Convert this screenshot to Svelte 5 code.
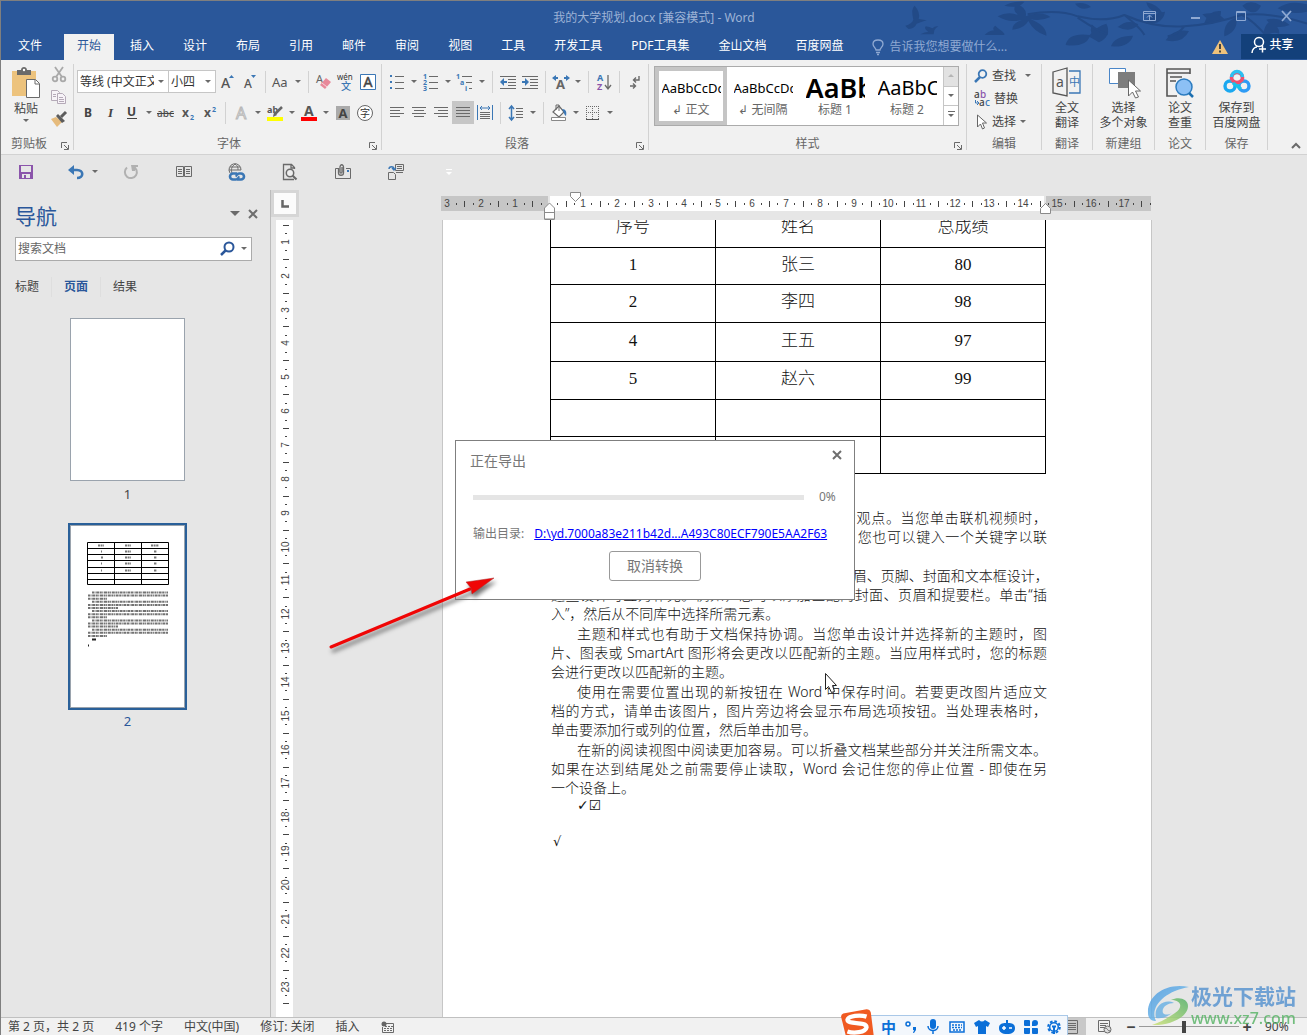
<script>
	const tabs = ['开始', '插入', '设计', '布局', '引用', '邮件', '审阅', '视图', '工具', '开发工具', 'PDF工具集', '金山文档', '百度网盘']
	let activeTab = $state('开始')
	let navTab = $state('页面')
	let zoom = $state(45)

	const g = 'fill="none" stroke="#6a6a6a"'
	const b = 'fill="none" stroke="#3b77b5"'

	// inner markup of the toolbar icons, each in its own w x h box
	const icons = {
		save: [16, 16, '<path fill="#8b55ab" d="M1 1h14v14H1z"/><path fill="#e6e6e6" d="M3 2h10v6H3zM4 10h8v4H4z"/><path fill="#8b55ab" d="M6 11h2v3H6z"/>'],
		undo: [16, 16, `<path ${b} stroke-width="2.6" d="M3 6h6c7 0 7 8 0 8"/><path fill="#3b77b5" d="M0 6l6-5v10z"/>`],
		redo: [16, 16, '<path fill="none" stroke="#b1b1b1" stroke-width="2" d="M10 2.5A6 6 0 1 1 4 3.5"/><path fill="#b1b1b1" d="M8 1h7v2h-3v4H9z"/>'],
		read: [18, 14, `<path ${g} d="M1.5 1.5h7v10h-7zM9.5 1.5h7v10h-7zM3 4.5h4M3 6.5h4M3 8.5h4M11 4.5h4M11 6.5h4M11 8.5h4"/>`],
		link: [18, 18, `<path ${g} d="M2 10a6 6 0 1 1 11-3M1 7h12M7 1c-4 3-4 6-3 9M7 1c3 2 3 4 3 6M2 4h10"/><path ${b} stroke-width="2.6" d="M9 10.5H5a3 3 0 0 0 0 6h3c2 0 3-2 2-3M9 16.5h4a3 3 0 0 0 0-6h-2c-2 0-3 2-2 3"/>`],
		preview: [16, 18, `<path ${g} stroke-width="1.3" d="M12 16.5H1.5v-15h8l3 3V6M9 2v3h4"/><circle cx="8" cy="10" r="3.7" fill="#eee" stroke="#6a6a6a" stroke-width="1.5"/><path ${g} stroke-width="2.2" d="M10.5 12.5l4 4"/>`],
		attach: [18, 16, `<path ${g} d="M4 4.5H1.5v10h15v-10H12"/><path ${g} stroke-width="1.3" d="M4.5 4v5c0 3 5 3 5 0V3c0-3-3.5-3-3.5 0v5c0 1.5 2 1.5 2 0V3"/><path fill="#3b77b5" d="M13 6h2v2h-2z"/>`],
		compare: [18, 18, `<path ${g} d="M8.5 1.5h8v6h-8zM10 3.5h5M10 5.5h5M9 9.5h7M1.5 9.5h5l2 2v5h-7z" /><path ${b} stroke-width="1.4" d="M2 6c0-3 5-3 5 0M5 5l2 2 2-2"/>`],
		more: [8, 8, '<path stroke="#fff" d="M1 1.5h6"/><path fill="#fff" d="M1 4h6L4 7z"/>'],
		paste: [30, 32, '<path fill="#edc37d" d="M1 4h24v25H1z"/><path fill="#6a6a6a" d="M6 3h4c0-4 6-4 6 0h4v5H6z"/><circle cx="13" cy="3" r="1.2" fill="#fff"/><path fill="#fff" stroke="#6a6a6a" d="M15.5 12.5h9l4 4v14h-13z"/><path fill="none" stroke="#6a6a6a" d="M24 13v4h4"/>'],
		cut: [16, 16, '<g fill="none" stroke="#a9a9a9" stroke-width="1.8"><path d="M4 0l7 10M12 0L5 10"/><circle cx="4" cy="12" r="2.3"/><circle cx="12" cy="12" r="2.3"/></g>'],
		copy: [16, 14, '<path fill="#f7f3f8" stroke="#b5aab8" d="M.5.5h6l2 2v8h-8z"/><path fill="#f7f3f8" stroke="#b5aab8" d="M6.5 3.5h5l3 3v7h-8z"/><path stroke="#b5aab8" d="M2 4.5h3M2 6.5h3M8 7.5h4M8 9.5h5M8 11.5h5"/>'],
		brush: [16, 16, '<path fill="#e6bb7c" d="M0 8l5-2 6 5-5 5z"/><path fill="#5c5c5c" d="M5 5l2-2 7 7-3 2z"/><path stroke="#5c5c5c" stroke-width="3" d="M10 6l5-5"/>'],
		grow: [14, 16, '<text x="0" y="14" font-size="14" fill="#555" font-weight="500">A</text><path fill="#3b77b5" d="M8 4l2.5-3L13 4z"/>'],
		shrink: [14, 16, '<text x="1" y="14" font-size="12" fill="#555" font-weight="500">A</text><path fill="#3b77b5" d="M8 1h5l-2.5 3z"/>'],
		caseAa: [20, 16, '<text x="1" y="13" font-size="13" fill="#555">Aa</text>'],
		eraser: [16, 16, '<text x="0" y="9" font-size="11" fill="#666">A</text><path fill="#e8899a" d="M10 4l5 4-6 7-5-4z"/><path stroke="#f8d3da" d="M6 9l5 4"/>'],
		pinyin: [18, 18, '<text x="0" y="7" font-size="8" fill="#333">wén</text><text x="4" y="17" font-size="10" font-weight="500" fill="#3b77b5">文</text>'],
		boxA: [16, 16, '<path fill="#fff" stroke="#3b77b5" d="M.5.5h15v15H.5z"/><text x="3.5" y="13" font-size="14" fill="#444" stroke="#444" stroke-width=".5">A</text>'],
		bold: [12, 16, '<text x="2" y="12" font-size="12" font-weight="700" fill="#444">B</text>'],
		italic: [12, 16, '<text x="4" y="12" font-size="13" font-weight="700" font-style="italic" font-family="Liberation Serif" fill="#444">I</text>'],
		under: [12, 16, '<text x="1" y="11" font-size="12" font-weight="700" fill="#444">U</text><path stroke="#444" d="M1 13.5h10"/>'],
		strike: [18, 16, '<text x="0" y="12" font-size="10" font-weight="500" fill="#555">abc</text><path stroke="#444" d="M0 8.5h17"/>'],
		sub: [14, 16, '<text x="1" y="12" font-size="12" font-weight="700" fill="#555">x</text><text x="9" y="15" font-size="7" font-weight="700" fill="#3b77b5">2</text>'],
		sup: [14, 16, '<text x="1" y="12" font-size="12" font-weight="700" fill="#555">x</text><text x="9" y="7" font-size="7" font-weight="700" fill="#3b77b5">2</text>'],
		effects: [16, 16, '<text x="3" y="14" font-size="16" fill="#fafafa" stroke="#b8b8b8">A</text>'],
		marker: [18, 18, '<text x="1" y="9" font-size="9" font-weight="700" fill="#555">ab</text><path stroke="#666" stroke-width="2.5" d="M16 3l-7 7"/><path fill="#666" d="M8 8l3 3-4 2z"/><path fill="#ff0" d="M1 13h16v4H1z"/>'],
		color: [18, 18, '<text x="4" y="12" font-size="14" font-weight="700" fill="#555">A</text><path fill="red" d="M1 13h16v4H1z"/>'],
		shade: [16, 16, '<path fill="#aaa" d="M1 1h14v14H1z"/><text x="3.5" y="13" font-size="13" font-weight="700" fill="#444">A</text>'],
		circled: [18, 18, '<circle cx="9" cy="9" r="7.5" fill="#fff" stroke="#666"/><text x="4" y="13" font-size="10" fill="#333">字</text>'],
		bullets: [16, 16, `<path fill="#3b77b5" d="M1 1h2v2H1zM1 7h2v2H1zM1 13h2v2H1z"/><path ${g} d="M6 2.5h9M6 8.5h9M6 14.5h9"/>`],
		numbers: [16, 18, `<g font-size="7" font-weight="700" fill="#3b77b5"><text y="6">1</text><text y="12">2</text><text y="18">3</text></g><path ${g} d="M6 3.5h9M6 9.5h9M6 15.5h9"/>`],
		levels: [18, 18, `<g font-size="7" font-weight="700" fill="#3b77b5"><text y="6">1</text><text x="4" y="12">a</text><text x="9" y="18">i</text></g><path ${g} d="M6 3.5h10M10 9.5h6M13 15.5h3"/>`],
		outdent: [18, 16, `<path ${g} d="M1 2.5h16M9 5.5h8M9 8.5h8M9 11.5h8M1 14.5h16"/><path fill="#3b77b5" d="M1 8l4-4v3h3v2H5v3z"/>`],
		indent: [18, 16, `<path ${g} d="M1 2.5h16M9 5.5h8M9 8.5h8M9 11.5h8M1 14.5h16"/><path fill="#3b77b5" d="M8 8L4 4v3H1v2h3v3z"/>`],
		width: [18, 16, '<text x="4" y="15" font-size="13" font-weight="700" fill="#666">A</text><path fill="#3b77b5" d="M0 4l4-3v2h2v2H4v2zM18 4l-4-3v2h-2v2h2v2z"/>'],
		sort: [16, 18, `<text x="1" y="8" font-size="9" font-weight="700" fill="#3b77b5">A</text><text x="1" y="17" font-size="9" font-weight="700" fill="#8b55ab">Z</text><path ${g} stroke-width="1.3" d="M12 2v14M9 12l3 4 3-4"/>`],
		marks: [12, 16, `<path ${g} stroke-width="1.4" d="M10 2v4H5M7 3.5L4.5 6 7 8.5M1 12h5M4 9.5L6.5 12 4 14.5"/>`],
		left: [16, 14, `<path ${g} d="M1 1.5h14M1 4.5h10M1 7.5h14M1 10.5h10"/>`],
		center: [16, 14, `<path ${g} d="M1 1.5h14M3 4.5h10M1 7.5h14M3 10.5h10"/>`],
		right: [16, 14, `<path ${g} d="M1 1.5h14M5 4.5h10M1 7.5h14M5 10.5h10"/>`],
		justify: [16, 14, `<path ${g} d="M1 1.5h14M1 4.5h14M1 7.5h14M1 10.5h14"/>`],
		distribute: [18, 18, `<path ${b} d="M1.5 1v15M16.5 1v15M4 4h10M6 2L4 4l2 2M12 2l2 2-2 2"/><path ${g} d="M4 8.5h10M4 10.5h10M4 12.5h10M4 14.5h10"/>`],
		spacing: [16, 18, `<path ${b} stroke-width="1.5" d="M3.5 2v14M1 5l2.5-3L6 5M1 13l2.5 3L6 13"/><path ${g} d="M8 4.5h7M8 7.5h7M8 10.5h7M8 13.5h7"/>`],
		bucket: [18, 18, '<path fill="#fff" stroke="#6a6a6a" stroke-width="1.2" d="M3 8l6-6 5 6-5 5z"/><path fill="none" stroke="#6a6a6a" d="M6 6V1h3v6"/><path fill="#3b77b5" d="M12 5c4 0 5 3 4 7-2-1-2-4-4-7z"/><path fill="#fff" stroke="#888" d="M1.5 13.5h14v3h-14z"/>'],
		borders: [16, 16, '<path fill="none" stroke="#6a6a6a" stroke-dasharray="1 1" d="M1.5 1v13M13.5 1v13M7.5 1v13M1 1.5h13M1 7.5h13"/><path stroke="#555" d="M1 14.5h13"/>'],
		find: [14, 14, `<circle cx="8.5" cy="5" r="3.8" ${b} stroke-width="1.8"/><path ${b} stroke-width="2.5" d="M6 8l-5 5"/>`],
		replace: [16, 16, '<g font-size="10" font-weight="500"><text x="0" y="7" fill="#444">a</text><text x="6" y="7" fill="#8b55ab">b</text><text x="5" y="15" fill="#444">a</text><text x="11" y="15" fill="#3b77b5">c</text></g><path fill="none" stroke="#3b77b5" d="M1.5 9v3H5M3 10l2 2-2 2"/>'],
		pointer: [14, 16, '<path fill="#fff" stroke="#666" d="M3.5 1v12l3-3 2 5 2-1-2-5h4z"/>'],
		translate: [30, 32, `<path fill="none" stroke="#555" stroke-width="1.3" d="M1 5l14-4v28L1 26z"/><text x="4" y="20" font-size="14" fill="#555">a</text><path ${b} stroke-width="1.3" d="M17 4h11v22H17"/><text x="17" y="19" font-size="11" fill="#3b77b5">中</text>`],
		objects: [32, 32, '<path fill="#fff" stroke="#4a86c8" d="M1.5 1.5h16v15h-16z"/><path fill="#7d7d7d" d="M10 5h17v16H10z"/><path fill="#fff" stroke="#666" d="M20.5 13v16l4-4 3 6 3-1-3-6h5z"/>'],
		paper: [30, 32, '<path fill="none" stroke="#555" stroke-width="1.6" d="M25 7V2H2v27h10M2 6h23"/><path stroke="#555" stroke-width="1.5" d="M5 10h12M5 14h6"/><circle cx="19" cy="20" r="8" fill="#8cc0f5" stroke="#2c7cc0" stroke-width="1.5"/><path stroke="#1c6fb0" stroke-width="2.5" d="M24 26l4 4"/>'],
		cloud: [30, 32, '<g fill="none" stroke-width="3.4"><circle cx="8" cy="19" r="5" stroke="#1aa8f0"/><circle cx="22" cy="19" r="5" stroke="#2e9bf5"/><circle cx="15" cy="11" r="5.5" stroke="#29c0f2"/><path stroke="#f0506e" d="M10 13a5.5 5.5 0 1 1 10 0q-5 5-10 0"/><path stroke="#29c0f2" d="M9.500 10a5.500 5.500 0 0 1 11 0"/><path stroke="#16c4e8" d="M11 16l8 6"/></g>'],
		launcher: [8, 8, `<path ${g} d="M.5 6V.5H6M3 3l4 4M7.5 3v4.5H3"/>`],
		search: [18, 16, '<circle cx="12" cy="6" r="4.5" fill="none" stroke="#2b579a" stroke-width="2"/><path stroke="#2b579a" stroke-width="2.5" d="M9 9l-5 5"/>'],
		close: [12, 12, '<path stroke="#6e6e6e" stroke-width="2" d="M2 2l8 8M10 2l-8 8"/>'],
		bulb: [12, 16, '<path fill="none" stroke="#8fa9d2" stroke-width="1.3" d="M4 11c0-2-3-3-3-6s2-4 5-4 5 1 5 4-3 4-3 6zM4 13.5h4M5 15.5h2"/>'],
		warn: [16, 16, '<path fill="#efc27b" d="M8 1l8 14H0z"/><path stroke="#444" stroke-width="2" d="M8 5v5M8 11.5v2"/>'],
		person: [16, 18, '<path fill="none" stroke="#fff" stroke-width="1.5" d="M1 17c0-4 3-6 5-6M8 1.5c6 0 6 9 0 9s-6-9 0-9M8 13h7M11.5 9.5v7"/>'],
		options: [14, 12, '<path fill="none" stroke="#8fa9d2" d="M.5 1.5h12v9H.5zM1 3.5h12M6.5 10V5M4 7.5L6.5 5 9 7.5"/>'],
		minimize: [10, 10, '<path stroke="#8fa9d2" stroke-width="2" d="M0 7h9"/>'],
		maximize: [12, 12, '<path fill="none" stroke="#8fa9d2" d="M.5 1.5h9v9h-9zM0 2.5h10"/>'],
		exit: [12, 12, '<path stroke="#8fa9d2" stroke-width="1.8" d="M2 1l9 10M11 1L2 11"/>'],
		record: [14, 12, `<path ${g} d="M4 2.5h8.5v9h-11V6"/><path ${g} stroke-dasharray="2 1" d="M4 5.5h8M3 7.5h9M3 9.5h9"/><circle cx="3" cy="3" r="2.5" fill="#666"/>`],
		print: [16, 14, `<path ${g} d="M2.5.5h11v13h-11zM4 3.5h8M4 5.5h8M4 7.5h8M4 9.5h8"/>`],
		web: [16, 14, `<path ${g} d="M7 11.5H1.5v-11h11V6M3 3.5h8M3 5.5h6M3 7.5h4"/><circle cx="10.5" cy="9.5" r="3.5" fill="#ddd" stroke="#6a6a6a"/><path ${g} d="M8 8c3 0 2 3 5 3"/>`],
		collapse: [10, 8, '<path fill="none" stroke="#6a6a6a" stroke-width="2" d="M1 6l4-4 4 4"/>']
	}

	// c marks a drop-down arrow after the button, '|' is a divider
	const fontTop = ['grow', 'shrink', '|', 'caseAa c', '|', 'eraser', 'pinyin', 'boxA']
	const fontBottom = ['bold', 'italic', 'under c', 'strike', 'sub', 'sup', '|', 'effects c', 'marker c', 'color c', 'shade', 'circled']
	const paraTop = ['bullets c', 'numbers c', 'levels c', '|', 'outdent', 'indent', '|', 'width c', '|', 'sort', '|', 'marks']
	const paraBottom = ['left', 'center', 'right', 'justify', 'distribute', '|', 'spacing c', '|', 'bucket c', 'borders c']

	const styles = [
		{ sample: 'AaBbCcDc', label: '↲ 正文', kind: 'body' },
		{ sample: 'AaBbCcDc', label: '↲ 无间隔', kind: 'body' },
		{ sample: 'AaBb', label: '标题 1', kind: 'h1' },
		{ sample: 'AaBbC', label: '标题 2', kind: 'h2' }
	]

	const bigGroups = [
		{ icon: 'translate', lines: ['全文', '翻译'], group: '翻译', width: 51 },
		{ icon: 'objects', lines: ['选择', '多个对象'], group: '新建组', width: 62 },
		{ icon: 'paper', lines: ['论文', '查重'], group: '论文', width: 51 },
		{ icon: 'cloud', lines: ['保存到', '百度网盘'], group: '保存', width: 62 }
	]

	const rows = [
		['序号', '姓名', '总成绩', 38],
		['1', '张三', '80', 37],
		['2', '李四', '98', 38],
		['4', '王五', '97', 39],
		['5', '赵六', '99', 38],
		['', '', '', 37],
		['', '', '', 37]
	]

	const paragraphs = [
		['视频提供了功能强大的方法帮助您证明您的观点。当您单击联机视频时，', '可以在想要添加的视频的嵌入代码中进行粘贴。您也可以键入一个关键字以联', '机搜索最适合您的文档的视频。'],
		['为使您的文档具有专业外观，Word 提供了页眉、页脚、封面和文本框设计，', '这些设计可互为补充。例如，您可以添加匹配的封面、页眉和提要栏。单击“插', '入”，然后从不同库中选择所需元素。'],
		['主题和样式也有助于文档保持协调。当您单击设计并选择新的主题时，图', '片、图表或 SmartArt 图形将会更改以匹配新的主题。当应用样式时，您的标题', '会进行更改以匹配新的主题。'],
		['使用在需要位置出现的新按钮在 Word 中保存时间。若要更改图片适应文', '档的方式，请单击该图片，图片旁边将会显示布局选项按钮。当处理表格时，', '单击要添加行或列的位置，然后单击加号。'],
		['在新的阅读视图中阅读更加容易。可以折叠文档某些部分并关注所需文本。', '如果在达到结尾处之前需要停止读取，Word 会记住您的停止位置 - 即使在另', '一个设备上。']
	]

	// ruler marks: a number per centimetre, a bar at the half, dots at the quarters
	const cm = 33.85
	const marks = (from, to, zero) => {
		const list = []
		for (let q = from * 4; q <= to * 4; q++) {
			if (q === 0) continue
			list.push({ at: Math.round(zero + (q * cm) / 4), n: q % 4 === 0 ? Math.abs(q / 4) : null, half: q % 2 === 0 })
		}
		return list
	}
	const across = marks(-3, 17.75, 108)
	const down = marks(-1, 23.5, -12).filter((m) => m.at > 0)
</script>

{#snippet icon(name)}
	<svg class="icon" width={icons[name][0]} height={icons[name][1]} viewBox="0 0 {icons[name][0]} {icons[name][1]}" aria-hidden="true">{@html icons[name][2]}</svg>
{/snippet}

{#snippet caret()}
	<svg class="icon" width="6" height="4" viewBox="0 0 6 4" aria-hidden="true"><path fill="#6a6a6a" d="M0 0h6L3 3z" /></svg>
{/snippet}

{#snippet tools(items)}
	{#each items as item}
		{#if item === '|'}
			<span class="divider"></span>
		{:else}
			<button class="tool" class:on={item === 'justify'} aria-label={item.split(' ')[0]}>{@render icon(item.split(' ')[0])}</button>
			{#if item.endsWith(' c')}
				<button class="drop" aria-label="more">{@render caret()}</button>
			{/if}
		{/if}
	{/each}
{/snippet}

<div class="window">
	<header class="top">
		<svg class="foliage" width="436" height="60" viewBox="0 0 1308 180" aria-hidden="true">
			<g fill="#224a87">
				<path d="M103 74q20-6 24-18-8-34 4-42 18 20 12 40l24 4q-18 6-30 10-6 14-24 16-6-4-10-10zM148 100q14-8 24-8-14-8-8-16 12 2 20 6 8-8 18-6-8 4-12 12l-2 12zM341 102q10-12 28-14-6-8 4-14 10 10 14 12 8 4 13 12v4z" />
				<path d="M380 46q30-16 62-4-22-16-4-32 32 12 26 36 50-18 74 2-30 14-60 6 50 20 48 50-36-10-54-44-14 24-48 26 0-20 30-30-40 12-74-10zM400 14q24-14 60-12-16 22-60 12z" />
				<path d="M584 132q8-38 72-30 24-28 50-34 18 36-22 56l-28-16q-14 32-72 24zM612 8q30-6 48 10-30 14-48-10zM662 70q24 16 20 54-30-20-20-54z" />
				<path d="M720 136q10-32 66-32-10 36-66 32zM826 4q34 6 50 34-44-4-50-34zM824 68q16-34 58-36-6 40-58 36zM740 78q30-26 62-8-22 28-62 8zM1000 66q12-40 50-36 0 46-50 36zM884 118q22-36 70-28-20 40-70 28z" />
				<path d="M994 40q44-10 66 14-34 20-66-14zM1060 106q-4-44 36-56 6 42-36 56zM1114 14q24-20 56 0-20 40-56 0zM1176 110q0-36 22-50 30 20 26 38-20-10-48 12zM1220 22q34-26 88-12v22q-46 12-88-10zM1186 56q40-10 70 16-44 18-70-16z" />
			</g>
			<g fill="none" stroke="#224a87" stroke-width="6">
				<path d="M470 40q90-16 150 6 80 20 140-4 90 40 180 34t170-34q90-10 198 26M620 50q60 40 90 50M760 42q50 40 60 60M940 76q-20 26-50 30M1110 40q40 20 80 70" />
			</g>
		</svg>
		<div class="title">
			<span class="doc-name">我的大学规划.docx [兼容模式] - Word</span>
			<div class="controls">
				<button aria-label="功能区显示选项">{@render icon('options')}</button>
				<button aria-label="最小化">{@render icon('minimize')}</button>
				<button aria-label="最大化">{@render icon('maximize')}</button>
				<button aria-label="关闭">{@render icon('exit')}</button>
			</div>
		</div>
		<nav class="tabs">
			<button class="tab file">文件</button>
			{#each tabs as tab}
				<button class="tab" class:active={tab === activeTab} onclick={() => (activeTab = tab)}>{tab}</button>
			{/each}
			<button class="tell">{@render icon('bulb')} 告诉我您想要做什么...</button>
			<span class="warn">{@render icon('warn')}</span>
			<button class="share">{@render icon('person')}共享</button>
		</nav>
	</header>

	<section class="ribbon">
		<div class="group clipboard">
			<div class="content">
				<button class="paste">{@render icon('paste')}<span>粘贴</span>{@render caret()}</button>
				<div class="stack">
					<button aria-label="剪切">{@render icon('cut')}</button>
					<button aria-label="复制">{@render icon('copy')}</button>
					<button aria-label="格式刷">{@render icon('brush')}</button>
				</div>
			</div>
			<div class="label">剪贴板<button class="launch" aria-label="剪贴板设置">{@render icon('launcher')}</button></div>
		</div>
		<div class="group font">
			<div class="content lines">
				<div class="line">
					<div class="combo face"><select aria-label="字体"><option>等线 (中文正文)</option></select>{@render caret()}</div>
					<div class="combo size"><select aria-label="字号"><option>小四</option></select>{@render caret()}</div>
					{@render tools(fontTop)}
				</div>
				<div class="line">{@render tools(fontBottom)}</div>
			</div>
			<div class="label">字体<button class="launch" aria-label="字体设置">{@render icon('launcher')}</button></div>
		</div>
		<div class="group para">
			<div class="content lines">
				<div class="line">{@render tools(paraTop)}</div>
				<div class="line">{@render tools(paraBottom)}</div>
			</div>
			<div class="label">段落<button class="launch" aria-label="段落设置">{@render icon('launcher')}</button></div>
		</div>
		<div class="group style-group">
			<div class="content">
				<div class="gallery">
					{#each styles as style, i}
						<button class="style" class:chosen={i === 0}>
							<span class="sample {style.kind}">{style.sample}</span>
							<span class="style-name">{style.label}</span>
						</button>
					{/each}
					<div class="scroller">
						<button class="dim" aria-label="上一行"><svg width="6" height="4" aria-hidden="true"><path fill="#b5b5b5" d="M0 3h6L3 0z" /></svg></button>
						<button aria-label="下一行">{@render caret()}</button>
						<button class="all" aria-label="全部样式">{@render caret()}</button>
					</div>
				</div>
			</div>
			<div class="label">样式<button class="launch" aria-label="样式设置">{@render icon('launcher')}</button></div>
		</div>
		<div class="group edit">
			<div class="content stack">
				<button>{@render icon('find')}查找 <i class="push">{@render caret()}</i></button>
				<button>{@render icon('replace')}替换</button>
				<button>{@render icon('pointer')}选择 {@render caret()}</button>
			</div>
			<div class="label">编辑</div>
		</div>
		{#each bigGroups as big}
			<div class="group" style:width="{big.width}px">
				<div class="content">
					<button class="big">{@render icon(big.icon)}<span>{big.lines[0]}<br />{big.lines[1]}</span></button>
				</div>
				<div class="label">{big.group}</div>
			</div>
		{/each}
		<button class="collapse" aria-label="折叠功能区">{@render icon('collapse')}</button>
	</section>

	<section class="quick">
		<button class="save" aria-label="保存">{@render icon('save')}</button>
		<button class="undo" aria-label="撤消">{@render icon('undo')}{@render caret()}</button>
		{#each ['redo', 'read', 'link', 'preview', 'attach', 'compare', 'more'] as name}
			<button aria-label={name}>{@render icon(name)}</button>
		{/each}
	</section>

	<main>
		<aside class="navigation">
			<div class="nav-head">
				<h2>导航</h2>
				<button aria-label="任务窗格选项"><svg width="10" height="6" aria-hidden="true"><path fill="#6a6a6a" d="M0 0h10L5 5z" /></svg></button>
				<button aria-label="关闭窗格">{@render icon('close')}</button>
			</div>
			<div class="search">
				<input type="text" placeholder="搜索文档" aria-label="搜索文档" />
				<button aria-label="搜索">{@render icon('search')}</button>
				<button aria-label="搜索选项">{@render caret()}</button>
			</div>
			<div class="nav-tabs">
				{#each ['标题', '页面', '结果'] as tab}
					<button class:active={tab === navTab} onclick={() => (navTab = tab)}>{tab}</button>
				{/each}
			</div>
			<div class="thumbs">
				<button class="thumb"><span class="sheet-small first"></span>1</button>
				<button class="thumb current">
					<span class="sheet-small">
						<svg width="113" height="181" viewBox="0 0 113 181" aria-hidden="true">
							<path fill="none" stroke="#000" d="M16.5 16.5h81v42h-81zM16 22.5h82M16 28.5h82M16 34.5h82M16 41.5h82M16 47.5h82M16 53.5h82M43.5 16v42M70.5 16v42" />
							<path stroke="#777" stroke-width="2" stroke-dasharray="2 .6" d="M27 19.5h6M54 19.5h6M80 19.5h8M30 25.5h1M54 25.5h6M83 25.5h3M30 31.5h2M54 31.5h6M83 31.5h3M30 37.5h1M54 37.5h6M83 37.5h3M30 44.5h1M54 44.5h6M83 44.5h3" />
							{#each Array(15) as _, i}
								<path stroke="#444" stroke-width="2" stroke-dasharray="2 .5 1 .7 3 .6" opacity=".75" d="M{i % 3 ? 17 : 21} {66.5 + i * 3.1}H{i % 3 === 2 ? 36 + ((i * 11) % 22) : 97}" />
							{/each}
							<path stroke="#222" stroke-width="2" d="M21 113.5h4M17 119.5h1" />
						</svg>
					</span>2
				</button>
			</div>
		</aside>

		<div class="side">
			<button class="corner" aria-label="左对齐式制表符"><svg width="8" height="8" aria-hidden="true"><path fill="none" stroke="#666" stroke-width="2.5" d="M1.5 0v6.5H8" /></svg></button>
			<svg class="down" width="17" height="797" aria-hidden="true">
				{#each down as m}
					{#if m.n}
						<text transform="translate(13 {m.at}) rotate(-90)" text-anchor="middle">{m.n}</text>
					{:else}
						<path d="M{m.half ? 7 : 9} {m.at + 0.5}h{m.half ? 6 : 2}" />
					{/if}
				{/each}
			</svg>
		</div>

		<div class="canvas">
			<div class="sheet">
				<svg class="across" width="710" height="26" aria-hidden="true">
					<path fill="#c6c6c6" d="M0 6h107v15H0zM605 6h105v15H605z" />
					<path fill="#fff" d="M109 6h494v15H109z" />
					{#each across as m}
						{#if m.n}
							<text x={m.at} y="17" text-anchor="middle">{m.n}</text>
						{:else}
							<path stroke="#444" d="M{m.at + 0.5} {m.half ? 11 : 13}v{m.half ? 6 : 2}" />
						{/if}
					{/each}
					<path fill="#fff" stroke="#8a8a8a" d="M129.5 2.5h10v4l-5 5-5-5zM103.5 29v-11l5-5 5 5v11zM103.5 22.5h10M103.5 29.5h10M599.5 23.5v-5l5-5 5 5v5z" />
				</svg>
				<article class="page">
					<table>
						<tbody>
							{#each rows as row}
								<tr style:height="{row[3]}px">
									<td>{row[0]}</td>
									<td>{row[1]}</td>
									<td>{row[2]}</td>
								</tr>
							{/each}
						</tbody>
					</table>
					<div class="text">
						{#each paragraphs as lines}
							<p>
								{#each lines as line}<span>{line}</span>{/each}
							</p>
						{/each}
						<p class="ticks">✓☑</p>
						<p class="root">√</p>
					</div>
				</article>

				<div class="dialog" role="dialog" aria-label="正在导出">
					<div class="dialog-head">
						<span>正在导出</span>
						<button aria-label="关闭">{@render icon('close')}</button>
					</div>
					<div class="progress"><progress max="100" value="0" aria-label="进度"></progress><span>0%</span></div>
					<div class="output">输出目录: <a href="#output">D:\yd.7000a83e211b42d...A493C80ECF790E5AA2F63</a></div>
					<button class="cancel">取消转换</button>
				</div>

				<svg class="arrow" width="180" height="90" viewBox="0 0 180 90" aria-hidden="true">
					<g class="shadow">
						<path stroke="#f00505" stroke-width="3" stroke-linecap="round" d="M6 77L145 19" />
						<path fill="#f00505" stroke="#a33" stroke-width=".5" d="M169 8l-22 16-1-6-5-6z" />
					</g>
				</svg>
				<svg class="cursor" width="14" height="22" viewBox="0 0 14 22" aria-hidden="true"><path fill="#fff" stroke="#222" d="M1.5 1.5v16l3-3 3 6 3-1-2-6h4z" /></svg>
			</div>
		</div>
	</main>

	<footer>
		<span>第 2 页，共 2 页</span>
		<span>419 个字</span>
		<span>中文(中国)</span>
		<span>修订: 关闭</span>
		<span>插入</span>
		{@render icon('record')}
		<div class="view">
			<button class="on" aria-label="页面视图">{@render icon('print')}</button>
			<button aria-label="Web 版式视图">{@render icon('web')}</button>
			<button class="sign" aria-label="缩小">−</button>
			<input type="range" min="0" max="100" bind:value={zoom} aria-label="显示比例" />
			<button class="sign" aria-label="放大">+</button>
			<span class="percent">90%</span>
		</div>
	</footer>

	<div class="ime">
		<svg class="sogou" width="34" height="30" viewBox="0 0 32 28" aria-hidden="true">
			<path fill="#f05a22" d="M3 5l22-4q3 0 4 3l3 24H6L1 8q0-2 2-3z" />
			<path fill="none" stroke="#fff" stroke-width="4" d="M25 8c-6-2-17-1-18 3 0 5 18 1 18 7-1 5-12 6-18 4" />
		</svg>
		<b>中</b>
		<svg width="12" height="12" viewBox="0 0 12 12" aria-hidden="true"><circle cx="3" cy="3" r="2" fill="none" stroke="#0b6fd8" stroke-width="1.5" /><path fill="#0b6fd8" d="M8 6h3v3l-2 3H8l1-3H8z" /></svg>
		<svg width="14" height="16" viewBox="0 0 14 16" aria-hidden="true"><rect x="4" width="6" height="10" rx="3" fill="#0b6fd8" /><path fill="none" stroke="#0b6fd8" stroke-width="1.5" d="M2 7c0 6 10 6 10 0M7 11v4" /></svg>
		<svg width="16" height="12" viewBox="0 0 16 12" aria-hidden="true"><path fill="none" stroke="#0b6fd8" stroke-width="1.5" d="M1 1h14v10H1z" /><path stroke="#0b6fd8" stroke-width="1.5" stroke-dasharray="2 1" d="M3 4h10M3 6.5h10M4 9h8" /></svg>
		<svg width="16" height="14" viewBox="0 0 16 14" aria-hidden="true"><path fill="#0b6fd8" d="M0 3l5-3q3 3 6 0l5 3-2 4-2-1v8H4V6L2 7z" /></svg>
		<svg width="16" height="14" viewBox="0 0 16 14" aria-hidden="true"><path fill="#0b6fd8" d="M7 0h2v3c4 0 7 1 7 5s-3 6-8 6-8-2-8-6 3-5 7-5z" /><path stroke="#fff" stroke-width="1.5" d="M3 8h4M5 6v4M10 8h3" /></svg>
		<svg width="14" height="14" viewBox="0 0 14 14" aria-hidden="true"><path fill="#0b6fd8" d="M1 0h4q1 0 1 1v5H1q-1 0-1-1V1q0-1 1-1zM8 3a3 3 0 0 1 6 0q0 3-3 3H8zM0 8h6v5q0 1-1 1H1q-1 0-1-1zM8 8h5q1 0 1 1v4q0 1-1 1H9q-1 0-1-1z" /></svg>
		<svg width="14" height="14" viewBox="0 0 14 14" aria-hidden="true"><circle cx="7" cy="7" r="5.8" fill="none" stroke="#0b6fd8" stroke-width="2" stroke-dasharray="2.6 1.9" /><circle cx="7" cy="7" r="4.3" fill="none" stroke="#0b6fd8" stroke-width="1.5" /><path stroke="#0b6fd8" stroke-width="2" d="M7 6v8M5 6.5h4" /></svg>
	</div>

	<div class="brand">
		<svg width="44" height="42" viewBox="0 0 44 42" aria-hidden="true">
			<defs>
				<linearGradient id="swirl" x1="0" y1="0" x2="1" y2="1"><stop offset="0" stop-color="#4f9be0" /><stop offset="1" stop-color="#7fc8ef" /></linearGradient>
				<linearGradient id="leaf" x1="1" y1="0" x2="0" y2="1"><stop offset="0" stop-color="#55b26a" /><stop offset="1" stop-color="#cfe27a" /></linearGradient>
			</defs>
			<path fill="url(#swirl)" d="M42 2C20-3 0 10 1 28c0 6 4 8 8 8C2 22 18 6 42 2z" />
			<path fill="url(#leaf)" d="M5 40c16 1 36-7 36-19 0-7-9-10-17-6 11 0 12 8 4 13-7 5-14 9-23 12z" />
			<path fill="#6fb3e4" d="M9 33c-3-12 9-20 18-15-6 0-13 4-11 10 2 2 5 2 9 0-5 4-10 6-16 5z" />
		</svg>
		<div><strong>极光下载站</strong><span>www.xz7.com</span></div>
	</div>
</div>

<style>
	:global(body) {
		margin: 0;
	}
	.window {
		display: flex;
		flex-direction: column;
		position: relative;
		box-sizing: border-box;
		height: 100vh;
		overflow: hidden;
		border-top: 1px solid #7f7f7f;
		border-left: 1px solid #7f7f7f;
		background: #e6e6e6;
		color: #444;
		font: 12px/16px "Noto Sans", "Noto Sans CJK SC", sans-serif;
	}
	button,
	select,
	input {
		margin: 0;
		padding: 0;
		border: 0;
		background: none;
		color: inherit;
		font: inherit;
	}
	button {
		display: flex;
		align-items: center;
		justify-content: center;
		white-space: nowrap;
	}
	.icon {
		flex: none;
		display: block;
		overflow: visible;
	}

	.top {
		position: relative;
		background: #2a579a;
		color: #fff;
	}
	.foliage {
		position: absolute;
		top: 0;
		right: 0;
	}
	.title {
		position: relative;
		display: flex;
		align-items: center;
		justify-content: center;
		height: 33px;
	}
	.doc-name {
		color: #9db3d6;
	}
	.controls {
		position: absolute;
		right: 0;
		top: 0;
		display: flex;
	}
	.controls button {
		width: 46px;
		height: 30px;
	}
	.controls button:last-child {
		width: 42px;
	}
	.tabs {
		position: relative;
		display: flex;
		gap: 3px;
		height: 26px;
		padding-left: 4px;
	}
	.tab {
		padding: 0 13px 2px;
	}
	.tab.file {
		margin-right: 6px;
	}
	.tab.active {
		background: #f1f1f1;
		color: #2a579a;
	}
	.tell {
		gap: 5px;
		margin-left: 13px;
		color: #8fa9d2;
	}
	.warn {
		display: flex;
		align-items: center;
		margin-left: auto;
		margin-right: 10px;
	}
	.share {
		gap: 2px;
		width: 66px;
		margin-bottom: 1px;
		padding: 0 3px 3px 0;
		box-sizing: border-box;
		background: #13407a;
		font-weight: 500;
	}

	.ribbon {
		display: flex;
		height: 94px;
		border-bottom: 1px solid #d2d2d2;
		background: #f1f1f1;
	}
	.group {
		display: flex;
		flex-direction: column;
		flex: none;
		box-sizing: border-box;
		margin: 4px 0;
		border-right: 1px solid #d2d2d2;
	}
	.content {
		display: flex;
		flex: 1;
	}
	.label {
		position: relative;
		display: flex;
		justify-content: center;
		height: 16px;
		margin-bottom: -2px;
		color: #666;
		line-height: 16px;
	}
	.launch {
		position: absolute;
		right: 4px;
		bottom: 2px;
	}
	.clipboard {
		width: 73px;
	}
	.clipboard .label {
		padding-right: 16px;
	}
	.paste {
		flex-direction: column;
		gap: 2px;
		width: 50px;
		padding-bottom: 10px;
	}
	.stack {
		display: flex;
		flex-direction: column;
		justify-content: space-around;
	}
	.clipboard .stack {
		padding-bottom: 6px;
	}
	.stack button {
		height: 22px;
	}
	.font {
		width: 308px;
		padding-left: 3px;
	}
	.lines {
		flex-direction: column;
		gap: 8px;
		padding-top: 6px;
	}
	.content.lines {
		flex: none;
		height: 62px;
		margin-bottom: auto;
	}
	.line {
		display: flex;
		align-items: center;
		height: 23px;
	}
	.combo {
		display: flex;
		align-items: center;
		box-sizing: border-box;
		height: 23px;
		margin-right: -1px;
		padding: 0 4px 0 2px;
		border: 1px solid #c6c6c6;
		background: #fff;
	}
	.combo select {
		flex: 1;
		min-width: 0;
		margin-right: 4px;
		appearance: none;
		color: #333;
	}
	.face {
		width: 92px;
	}
	.size {
		width: 48px;
		margin-right: 1px;
	}
	.tool {
		flex: none;
		width: 22px;
		height: 23px;
	}
	.tool.on {
		background: #c6c6c6;
	}
	.drop {
		flex: none;
		width: 12px;
		height: 23px;
	}
	.divider {
		width: 1px;
		height: 22px;
		margin: 0 4px;
		background: #d2d2d2;
	}
	.para {
		width: 267px;
		padding-left: 4px;
	}
	.style-group {
		width: 318px;
	}
	.gallery {
		display: flex;
		box-sizing: border-box;
		height: 60px;
		margin: 2px 0 0 5px;
		border: 1px solid #ababab;
		background: #fff;
	}
	.style {
		flex-direction: column;
		box-sizing: border-box;
		width: 72px;
		gap: 1px;
		border: 3px solid transparent;
	}
	.style.chosen {
		border: 4px solid #c5c5c5;
	}
	.sample {
		width: 59px;
		height: 26px;
		overflow: hidden;
		color: #000;
		font-size: 13px;
		line-height: 26px;
		text-align: left;
	}
	.sample.h1 {
		font-size: 27px;
		font-weight: 600;
	}
	.sample.h2 {
		font-size: 20px;
	}
	.style-name {
		color: #666;
	}
	.scroller {
		display: flex;
		flex-direction: column;
		border-left: 1px solid #c6c6c6;
	}
	.scroller button {
		flex: 1;
		width: 14px;
		border-top: 1px solid #c6c6c6;
	}
	.scroller .dim {
		border-top: 0;
		background: #e2e2e2;
	}
	.scroller .all::before {
		position: absolute;
		width: 7px;
		height: 1px;
		margin-bottom: 8px;
		background: #6a6a6a;
		content: "";
	}
	.edit {
		width: 75px;
	}
	.edit .content {
		justify-content: flex-start;
		padding-left: 7px;
	}
	.edit .content button {
		gap: 4px;
		height: 23px;
		justify-content: flex-start;
	}
	.edit .push {
		margin-left: 5px;
	}
	.big {
		flex: 1;
		flex-direction: column;
		justify-content: flex-start;
		gap: 1px;
		padding-top: 3px;
		line-height: 15px;
	}
	.collapse {
		align-self: flex-end;
		margin: 0 6px 4px auto;
	}

	.quick {
		display: flex;
		height: 34px;
		padding-bottom: 1px;
	}
	.quick button {
		width: 53px;
	}
	.quick .save {
		width: 50px;
	}
	.quick .undo {
		box-sizing: border-box;
		gap: 8px;
		padding-left: 10px;
	}

	main {
		display: flex;
		flex: 1;
		min-height: 0;
	}
	.navigation {
		flex: none;
		box-sizing: border-box;
		width: 270px;
		padding: 0 18px 0 14px;
		border-right: 1px solid #bcbcbc;
	}
	.nav-head {
		display: flex;
		align-items: center;
		gap: 7px;
		height: 47px;
		margin-right: -7px;
	}
	h2 {
		margin: 5px auto 0 0;
		color: #2a579a;
		font-size: 21px;
		font-weight: 400;
		line-height: 28px;
	}
	.search {
		display: flex;
		align-items: center;
		box-sizing: border-box;
		height: 24px;
		padding: 0 4px 0 2px;
		border: 1px solid #ababab;
		background: #fff;
	}
	.search input {
		flex: 1;
		min-width: 0;
		outline: 0;
	}
	.search input::placeholder {
		color: #666;
	}
	.search button {
		margin-left: 6px;
	}
	.nav-tabs {
		display: flex;
		margin-top: 16px;
	}
	.nav-tabs button {
		height: 20px;
		padding-right: 12px;
		margin-right: 12px;
		border-right: 1px solid #dedede;
	}
	.nav-tabs button:last-child {
		border: 0;
	}
	.nav-tabs .active {
		color: #2a579a;
		font-weight: 700;
	}
	.thumbs {
		display: flex;
		flex-direction: column;
		align-items: center;
		gap: 23px;
		margin-top: 21px;
		padding-right: 12px;
	}
	.thumb {
		flex-direction: column;
		gap: 5px;
		font-size: 13px;
	}
	.sheet-small {
		display: block;
		width: 113px;
		height: 181px;
		border: 1px solid #9aa3ad;
		background: #fff;
	}
	.sheet-small.first {
		height: 161px;
	}
	.thumb.current {
		color: #2a579a;
	}
	.current .sheet-small {
		outline: 2px solid #2a6099;
	}

	.side {
		flex: none;
		width: 27px;
	}
	.corner {
		box-sizing: border-box;
		width: 28px;
		height: 27px;
		border: 3px solid #d6d6d6;
		background: #fbfbfb;
	}
	.down {
		display: block;
		margin: 3px 0 0 5px;
		background: #fff;
	}
	.down path {
		stroke: #444;
	}
	.down text,
	.across text {
		fill: #444;
		font: 10px "Liberation Sans", sans-serif;
	}
	.canvas {
		display: flex;
		flex: 1;
		justify-content: center;
		min-width: 0;
		padding-right: 13px;
	}
	.sheet {
		position: relative;
		display: flex;
		flex-direction: column;
		flex: none;
	}
	.across {
		display: block;
		flex: none;
		margin-bottom: 4px;
		overflow: visible;
	}
	.page {
		box-sizing: border-box;
		flex: 1;
		min-height: 0;
		margin: 0 -1px 0 1px;
		overflow: hidden;
		padding: 0 104px 0 107px;
		border-right: 1px solid #c6c6c6;
		border-left: 1px solid #c6c6c6;
		background: #fff;
		color: #111;
	}
	table {
		width: 496px;
		margin-top: -11px;
		border-collapse: collapse;
		table-layout: fixed;
	}
	td {
		padding: 0 0 3px;
		border: 1px solid #000;
		font: 300 17px/20px "Liberation Serif", "Noto Sans CJK SC", serif;
		text-align: center;
	}
	.text {
		width: 496px;
		margin: 34px 0 0 1px;
		font: 300 14px/19px "Noto Sans", "Noto Sans CJK SC", sans-serif;
	}
	.text p {
		margin: 0 0 1px;
	}
	.text span {
		display: block;
		text-align: justify;
		text-align-last: justify;
		white-space: nowrap;
	}
	.text span:first-child {
		padding-left: 26px;
	}
	.text span:last-child {
		text-align-last: left;
	}
	.text .ticks {
		padding-left: 26px;
		font: 14px/14px "DejaVu Sans", sans-serif;
	}
	.text .root {
		margin-top: 20px;
		padding-left: 2px;
		font: 13px/19px "DejaVu Sans", sans-serif;
	}

	.dialog {
		position: absolute;
		top: 250px;
		left: 14px;
		box-sizing: border-box;
		width: 400px;
		padding: 8px 16px 18px;
		border: 1px solid #7f7f7f;
		background: #fff;
		color: #777;
	}
	.dialog-head {
		display: flex;
		justify-content: space-between;
		align-items: flex-start;
		margin: 0 -5px 0 -2px;
		font-size: 14px;
		line-height: 24px;
	}
	.progress {
		display: flex;
		align-items: center;
		justify-content: space-between;
		margin: 16px 0 21px 1px;
	}
	.progress span {
		width: 19px;
	}
	progress {
		width: 331px;
		height: 5px;
		appearance: none;
		border: 0;
		background: #e5e5e5;
	}
	progress::-webkit-progress-bar {
		background: #e5e5e5;
	}
	.output {
		display: flex;
		gap: 10px;
		margin-left: 1px;
		white-space: nowrap;
	}
	.output a {
		color: #00f;
	}
	.cancel {
		box-sizing: border-box;
		width: 92px;
		height: 30px;
		margin: 9px auto 0;
		border: 1px solid #999;
		border-radius: 3px;
		background: #fff;
		font-size: 14px;
	}
	.arrow {
		position: absolute;
		top: 380px;
		left: -116px;
	}
	.shadow {
		filter: drop-shadow(2px 4px 2px #777);
	}
	.cursor {
		position: absolute;
		top: 482px;
		left: 383px;
	}

	footer {
		display: flex;
		align-items: center;
		gap: 21px;
		flex: none;
		height: 17px;
		padding-left: 7px;
		border-top: 1px solid #c0c0c0;
		background: #f1f1f1;
		white-space: nowrap;
	}
	.view {
		display: flex;
		align-items: center;
		gap: 3px;
		margin-left: auto;
		padding-right: 16px;
	}
	.view button {
		height: 17px;
	}
	.view .on {
		width: 28px;
		margin-right: 8px;
		background: #c8c8c8;
	}
	.view .sign {
		width: 10px;
		margin-left: 10px;
		font-size: 16px;
		font-weight: 700;
	}
	.view input + .sign {
		margin-left: 0;
	}
	.view input {
		width: 100px;
		height: 14px;
		appearance: none;
		background: linear-gradient(#999, #999) center / 100% 1px no-repeat;
	}
	.view input::-webkit-slider-thumb {
		appearance: none;
		width: 4px;
		height: 12px;
		background: #444;
	}
	.percent {
		width: 26px;
		margin-left: 10px;
	}

	.ime {
		position: absolute;
		bottom: -4px;
		right: 239px;
		display: flex;
		align-items: center;
		justify-content: space-between;
		box-sizing: border-box;
		width: 226px;
		height: 24px;
		padding-right: 6px;
		border: 1px solid #a9c8e8;
		border-left: 0;
		background: #f3f7fc;
	}
	.ime b {
		color: #0b6fd8;
		font-size: 15px;
	}
	.sogou {
		margin: -8px -2px 0 -2px;
	}
	.brand {
		position: absolute;
		right: 11px;
		bottom: 7px;
		display: flex;
		align-items: center;
		opacity: 0.85;
		pointer-events: none;
	}
	.brand div {
		display: flex;
		flex-direction: column;
	}
	.brand strong {
		color: #5b96d0;
		font-size: 21px;
		line-height: 24px;
	}
	.brand span {
		color: #5cb56a;
		font-size: 16px;
		font-weight: 500;
		line-height: 20px;
	}
</style>
